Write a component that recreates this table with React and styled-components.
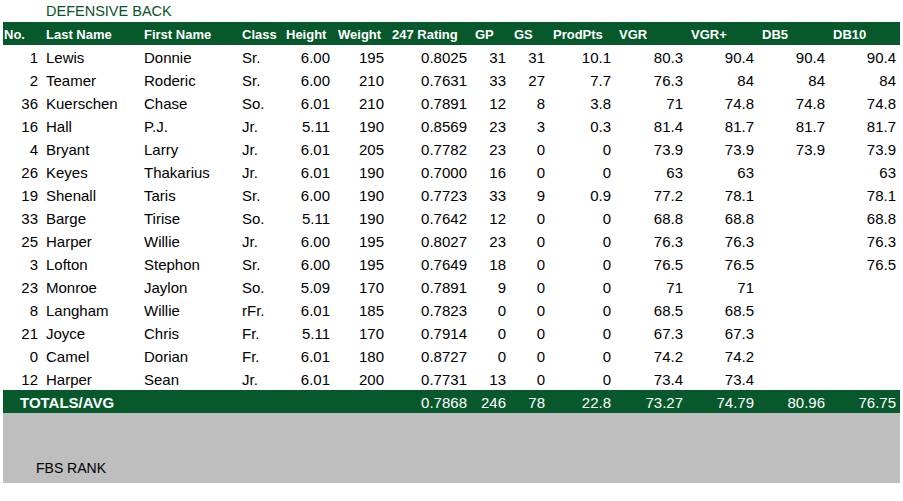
import styled, { createGlobalStyle } from "styled-components";

const GREEN = "#07592c";

const columns = [
  { key: "no", label: "No.", width: 39, align: "right" },
  { key: "last", label: "Last Name", width: 98, align: "left" },
  { key: "first", label: "First Name", width: 98, align: "left" },
  { key: "cls", label: "Class", width: 44, align: "left" },
  { key: "height", label: "Height", width: 52, align: "right" },
  { key: "weight", label: "Weight", width: 54, align: "right" },
  { key: "rating", label: "247 Rating", width: 83, align: "right" },
  { key: "gp", label: "GP", width: 39, align: "right" },
  { key: "gs", label: "GS", width: 39, align: "right" },
  { key: "prod", label: "ProdPts", width: 66, align: "right" },
  { key: "vgr", label: "VGR", width: 72, align: "right" },
  { key: "vgrp", label: "VGR+", width: 71, align: "right" },
  { key: "db5", label: "DB5", width: 71, align: "right" },
  { key: "db10", label: "DB10", width: 71, align: "right" },
];

const players = [
  ["1", "Lewis", "Donnie", "Sr.", "6.00", "195", "0.8025", "31", "31", "10.1", "80.3", "90.4", "90.4", "90.4"],
  ["2", "Teamer", "Roderic", "Sr.", "6.00", "210", "0.7631", "33", "27", "7.7", "76.3", "84", "84", "84"],
  ["36", "Kuerschen", "Chase", "So.", "6.01", "210", "0.7891", "12", "8", "3.8", "71", "74.8", "74.8", "74.8"],
  ["16", "Hall", "P.J.", "Jr.", "5.11", "190", "0.8569", "23", "3", "0.3", "81.4", "81.7", "81.7", "81.7"],
  ["4", "Bryant", "Larry", "Jr.", "6.01", "205", "0.7782", "23", "0", "0", "73.9", "73.9", "73.9", "73.9"],
  ["26", "Keyes", "Thakarius", "Jr.", "6.01", "190", "0.7000", "16", "0", "0", "63", "63", "", "63"],
  ["19", "Shenall", "Taris", "Sr.", "6.00", "190", "0.7723", "33", "9", "0.9", "77.2", "78.1", "", "78.1"],
  ["33", "Barge", "Tirise", "So.", "5.11", "190", "0.7642", "12", "0", "0", "68.8", "68.8", "", "68.8"],
  ["25", "Harper", "Willie", "Jr.", "6.00", "195", "0.8027", "23", "0", "0", "76.3", "76.3", "", "76.3"],
  ["3", "Lofton", "Stephon", "Sr.", "6.00", "195", "0.7649", "18", "0", "0", "76.5", "76.5", "", "76.5"],
  ["23", "Monroe", "Jaylon", "So.", "5.09", "170", "0.7891", "9", "0", "0", "71", "71", "", ""],
  ["8", "Langham", "Willie", "rFr.", "6.01", "185", "0.7823", "0", "0", "0", "68.5", "68.5", "", ""],
  ["21", "Joyce", "Chris", "Fr.", "5.11", "170", "0.7914", "0", "0", "0", "67.3", "67.3", "", ""],
  ["0", "Camel", "Dorian", "Fr.", "6.01", "180", "0.8727", "0", "0", "0", "74.2", "74.2", "", ""],
  ["12", "Harper", "Sean", "Jr.", "6.01", "200", "0.7731", "13", "0", "0", "73.4", "73.4", "", ""],
];

const totals = ["0.7868", "246", "78", "22.8", "73.27", "74.79", "80.96", "76.75"];

const GlobalStyle = createGlobalStyle`
  body {
    margin: 0;
    background: #fff;
    font-family: "Liberation Sans", Arial, sans-serif;
  }
`;

const Sheet = styled.div`
  width: 903px;
  padding-left: 3px;
  box-sizing: border-box;
`;

const Title = styled.div`
  height: 22px;
  line-height: 22px;
  padding-left: 43px;
  font-size: 14.5px;
  color: #0b5228;
  box-sizing: border-box;
`;

const Table = styled.table`
  border-collapse: collapse;
  table-layout: fixed;
  width: 897px;
`;

const HeadRow = styled.tr`
  background: ${GREEN};
`;

const HeadCell = styled.th`
  height: 23px;
  box-sizing: border-box;
  padding: 3px 0 0 ${(p) => (p.$first ? "1px" : "4px")};
  line-height: 20px;
  font-size: 13px;
  font-weight: 700;
  color: #fff;
  text-align: left;
  white-space: nowrap;
  overflow: visible;
`;

const Cell = styled.td`
  height: 23px;
  box-sizing: border-box;
  padding: 2px ${(p) => (p.$align === "right" ? "4px" : "0")} 0
    ${(p) => (p.$align === "left" ? "4px" : "0")};
  line-height: 21px;
  font-size: 15px;
  color: #000;
  text-align: ${(p) => p.$align};
  white-space: nowrap;
  overflow: visible;
`;

const TotalRow = styled.tr`
  background: ${GREEN};
`;

const TotalLabel = styled(Cell)`
  color: #fff;
  font-weight: 700;
  padding-left: 17px;
`;

const TotalCell = styled(Cell)`
  color: #fff;
`;

const Footer = styled.div`
  width: 897px;
  height: 70px;
  background: #bebebe;
  display: flex;
  align-items: flex-end;
  padding: 0 0 6px 33px;
  box-sizing: border-box;
`;

const FooterLabel = styled.span`
  font-size: 14px;
  color: #000;
  line-height: 17px;
`;

export default function App() {
  return (
    <>
      <GlobalStyle />
      <Sheet>
        <Title>DEFENSIVE BACK</Title>
        <Table>
          <colgroup>
            {columns.map((c) => (
              <col key={c.key} style={{ width: c.width }} />
            ))}
          </colgroup>
          <thead>
            <HeadRow>
              {columns.map((c, i) => (
                <HeadCell key={c.key} $first={i === 0}>
                  {c.label}
                </HeadCell>
              ))}
            </HeadRow>
          </thead>
          <tbody>
            {players.map((row, r) => (
              <tr key={r}>
                {row.map((v, i) => (
                  <Cell key={columns[i].key} $align={columns[i].align}>
                    {v}
                  </Cell>
                ))}
              </tr>
            ))}
            <TotalRow>
              <TotalLabel colSpan={6} $align="left">
                TOTALS/AVG
              </TotalLabel>
              {totals.map((v, i) => (
                <TotalCell key={i} $align="right">
                  {v}
                </TotalCell>
              ))}
            </TotalRow>
          </tbody>
        </Table>
        <Footer>
          <FooterLabel>FBS RANK</FooterLabel>
        </Footer>
      </Sheet>
    </>
  );
}
